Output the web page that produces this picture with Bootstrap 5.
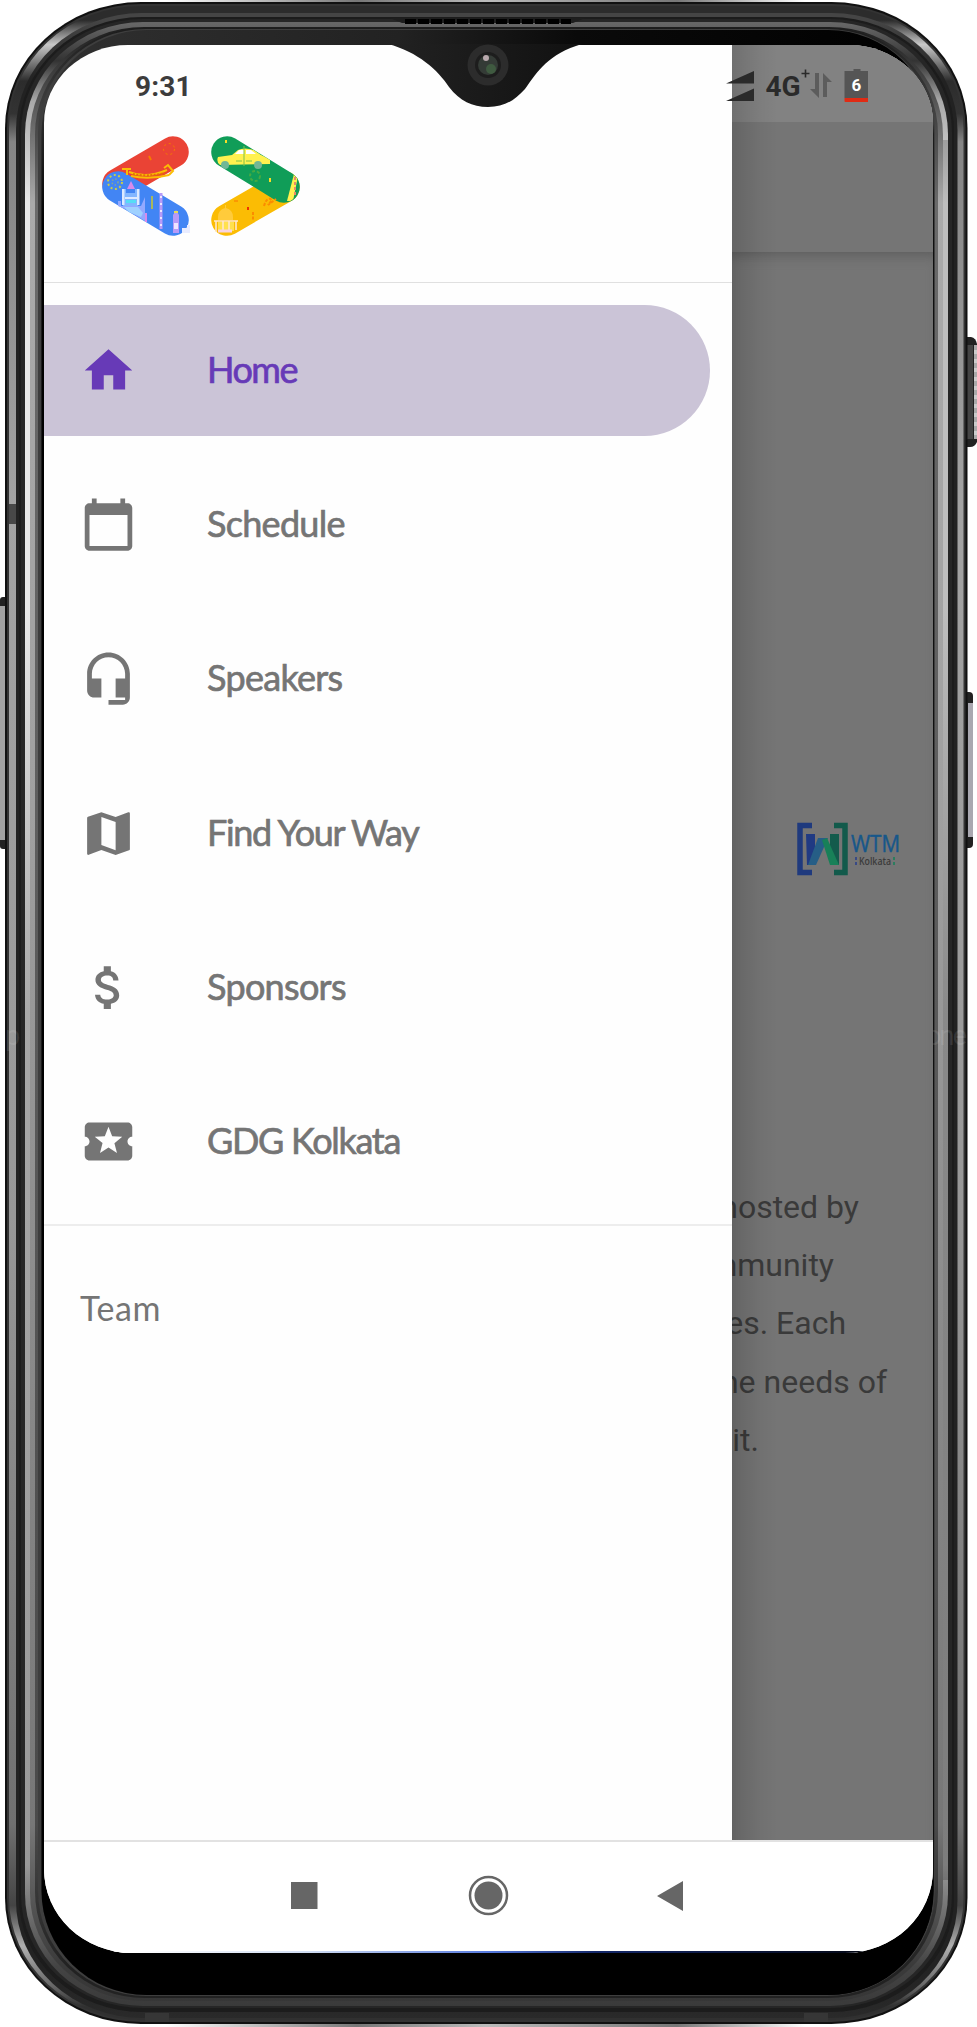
<!DOCTYPE html>
<html lang="en">
<head>
<meta charset="utf-8">
<meta name="viewport" content="width=device-width, initial-scale=1">
<title>DevFest Kolkata</title>
<link href="https://cdn.jsdelivr.net/npm/bootstrap@5.3.0/dist/css/bootstrap.min.css" rel="stylesheet">
<style>
  body { background: #fff; font-family: Roboto, sans-serif; }
  .phone { width: 977px; height: 2027px; padding: 45px 44px 74px; }
  .shell { top: 0; left: 0; pointer-events: none; }
  .display-area { height: 1908px; border-radius: 84px 84px 88px 88px / 78px 78px 84px 84px; background: #fefefe; }
  .statusbar { top: 0; left: 0; right: 0; height: 76px; color: #3c3c3c; font-weight: 700; font-size: 28px; line-height: 33px; padding: 25px 65px 0 91px; letter-spacing: .2px; }
  .drawer { width: 688px; font-family: Lato, "Open Sans", sans-serif; font-size: 36px; color: #757575; }
  .drawer-head { height: 238px; padding: 88px 0 0 56px; border-bottom: 1px solid #e0e0e0; }
  .drawer-list { padding-top: 22px; border-bottom: 2px solid #ededed; height: 943px; }
  .drawer-list .item { height: 131px; margin-bottom: 23.2px; width: 666px; padding-left: 36px; border-radius: 0 66px 66px 0; color: inherit; -webkit-text-stroke: .7px currentColor; letter-spacing: -.7px; }
  .drawer-list .item.active { background: #cbc4d7; color: #673ab7; }
  .item svg { width: 57px; height: 57px; margin-right: 70px; flex: none; }
  .item span { padding-bottom: 3px; }
  .item .snug { letter-spacing: -1.5px; }
  .item .tight { letter-spacing: -1.3px; }
  .team { padding: 57px 0 0 36px; font-size: 34px; line-height: 50px; letter-spacing: .6px; }
  .scrim { background: #757575; min-width: 0; }
  .scrim-status { height: 77px; background: #828282; }
  .scrim-bar { height: 130px; }
  .scrim-page { box-shadow: inset 0 10px 14px -8px #5a5a5a; }
  .edge { top: 0; bottom: 0; left: 0; width: 46px; background: linear-gradient(90deg, rgba(0,0,0,.14), rgba(0,0,0,.04) 60%, transparent); }
  .wtm { margin: 568px 0 0 62px; }
  .copy { margin-top: 300px; font-size: 32px; line-height: 58.2px; color: #3a3a3a; }
  .navkeys { height: 113px; border-top: 2px solid #e2e2e2; }
</style>
</head>
<body>
<div class="phone position-relative">
  <!-- metal frame, side keys -->
  <svg class="shell position-absolute" width="977" height="2027" viewBox="0 0 977 2027">
    <defs>
      <linearGradient id="rim" gradientUnits="userSpaceOnUse" x1="0" y1="0" x2="0" y2="2027"><stop offset=".01" stop-color="#2c2c2c"/><stop offset=".022" stop-color="#c8c8c8"/><stop offset=".04" stop-color="#2c2c2c"/><stop offset=".056" stop-color="#333"/><stop offset=".07" stop-color="#858585"/><stop offset=".25" stop-color="#a3a3a3"/><stop offset=".6" stop-color="#989898"/><stop offset=".9" stop-color="#707070"/><stop offset=".94" stop-color="#444"/><stop offset=".96" stop-color="#b0b0b0"/><stop offset=".98" stop-color="#666"/><stop offset=".99" stop-color="#303030"/></linearGradient>
      <linearGradient id="mid" gradientUnits="userSpaceOnUse" x1="0" y1="0" x2="0" y2="2027"><stop offset=".01" stop-color="#454545"/><stop offset=".04" stop-color="#222"/><stop offset=".97" stop-color="#222"/><stop offset="1" stop-color="#2b2b2b"/></linearGradient>
      <linearGradient id="shine" gradientUnits="userSpaceOnUse" x1="0" y1="0" x2="0" y2="2027"><stop offset=".012" stop-color="#666"/><stop offset=".03" stop-color="#333"/><stop offset=".05" stop-color="#aaa"/><stop offset=".1" stop-color="#e8e8e8"/><stop offset=".3" stop-color="#e8e8e8"/><stop offset=".5" stop-color="#a8a8a8"/><stop offset=".92" stop-color="#999"/><stop offset=".97" stop-color="#444"/><stop offset=".99" stop-color="#3a3a3a"/></linearGradient>
      <linearGradient id="shine2" gradientUnits="userSpaceOnUse" x1="0" y1="0" x2="0" y2="2027"><stop offset=".012" stop-color="#1c1c1c"/><stop offset=".04" stop-color="#444"/><stop offset=".1" stop-color="#aaa"/><stop offset=".4" stop-color="#a0a0a0"/><stop offset=".9" stop-color="#777"/><stop offset=".97" stop-color="#3a3a3a"/><stop offset=".99" stop-color="#363636"/></linearGradient>
      <linearGradient id="inner" gradientUnits="userSpaceOnUse" x1="0" y1="0" x2="0" y2="2027"><stop offset=".014" stop-color="#1c1c1c"/><stop offset=".05" stop-color="#3c3c3c"/><stop offset=".1" stop-color="#6a6a6a"/><stop offset=".9" stop-color="#4a4a4a"/><stop offset=".97" stop-color="#222"/></linearGradient>
      <linearGradient id="bezel" x1="0" x2="1"><stop offset="0" stop-color="#303030"/><stop offset=".4" stop-color="#222"/><stop offset=".6" stop-color="#0a0a0a"/><stop offset="1" stop-color="#000"/></linearGradient>
      <linearGradient id="down" x1="0" y1="0" x2="0" y2="1"><stop offset=".04" stop-color="#000" stop-opacity="0"/><stop offset=".1" stop-color="#000"/></linearGradient>
      <linearGradient id="lip" x1="0" x2="1"><stop offset="0" stop-color="#fff"/><stop offset=".3" stop-color="#777"/><stop offset=".5" stop-color="#bbb"/><stop offset=".8" stop-color="#777"/><stop offset="1" stop-color="#fff"/></linearGradient>
    </defs>
    <rect x="165" y="0" width="640" height="3" fill="url(#lip)"/>
    <rect x="165" y="2023" width="640" height="4" fill="url(#lip)"/>
    <rect x="0" y="597" width="9" height="252" rx="3" fill="#222"/><rect x="0" y="606" width="5" height="234" fill="#a2a2a2"/>
    <path d="M963 337h8q5 1 6 7v98q-2 5-7 5h-7z" fill="#222"/><rect x="967" y="345" width="6" height="94" fill="#454545"/><path d="M975.500 345v94" stroke="#ccc" stroke-width="3"/><path d="M975.500 345v94" stroke="#aaa" stroke-width="3" stroke-dasharray="5 4"/>
    <rect x="962" y="692" width="11" height="156" rx="4" fill="#222"/><rect x="968" y="703" width="5" height="134" fill="#a9a8b0"/>
    <rect x="5" y="2" width="962.500" height="2022" rx="136" ry="126" fill="#111"/>
    <rect x="7" y="4" width="958.500" height="2018" rx="134" ry="124" fill="#333"/>
    <rect x="9" y="6" width="954.500" height="2014" rx="132" ry="122" fill="url(#rim)"/>
    <rect x="16" y="13" width="941.500" height="2005" rx="126" ry="117" fill="url(#mid)"/>
    <rect x="19" y="17" width="935" height="1995" rx="123" ry="114" fill="#1c1c1c"/>
    <rect x="21" y="19" width="931" height="1989" rx="122" ry="113" fill="#262626"/>
    <rect x="25" y="22" width="923" height="1984" rx="118" ry="112" fill="url(#shine)"/>
    <path d="M945.500 140v1740" stroke="#000" stroke-opacity=".18" stroke-width="5"/>
    <rect x="30" y="27" width="913" height="1974" rx="114" ry="108" fill="url(#shine2)"/>
    <rect x="35" y="28" width="903" height="1970" rx="110" ry="106" fill="url(#inner)"/>
    <rect x="38" y="29" width="897" height="1967" rx="108" ry="105" fill="#3e3e3e"/>
    <rect x="41.500" y="30" width="892" height="1965" rx="105" ry="104" fill="url(#bezel)"/>
    <rect x="41.500" y="30" width="892" height="1965" rx="105" ry="104" fill="url(#down)"/>
    <rect x="9" y="504" width="7" height="20" fill="#484848"/>
    <rect x="145" y="2013" width="24" height="9" fill="#363636"/><rect x="804" y="2013" width="24" height="9" fill="#363636"/>
    <path d="M390 18h195l-12 5H402z" fill="#1e1e1e"/><path d="M405 21.500h166" stroke="#000" stroke-width="5" stroke-dasharray="11 2"/>
    <g font-family="Roboto" font-size="27" fill="#fff" fill-opacity=".1"><text x="5" y="1045">p</text><text x="926" y="1045" textLength="41">one</text></g>
  </svg>

  <div class="display-area position-relative overflow-hidden d-flex flex-column">
    <div class="d-flex flex-grow-1">
      <nav class="drawer flex-shrink-0">
        <div class="drawer-head">
          <svg width="204" height="110" viewBox="100 133 204 110">
            <defs>
              <clipPath id="cg"><path d="M235 138.500 292 173.500A15.700 15.700 0 0 1 276 200.500L219 165.500A15.700 15.700 0 0 1 235 138.500z"/></clipPath>
            </defs>
            <g stroke-width="31.500" stroke-linecap="round">
              <path d="M173 152 118 184" stroke="#ea4335"/><path d="M118 187 173 220" stroke="#4285f4"/>
              <path d="M227 220 284 187" stroke="#fbbc04"/><path d="M227 152 284 187" stroke="#109d58"/>
            </g>
            <g fill="none" stroke="#fbbc04" stroke-width="2"><path d="M122 169h9M127 168v7M129 172q17 7 38-2M131 176q18 4 38-1M164 168l4-3 5 6-4 4"/><path d="M133 174q14 3 32-1" stroke="#e37400" stroke-dasharray="2 1.500"/><circle cx="169" cy="149" r="5.500" stroke="#f57c00" stroke-width="1" stroke-dasharray="2 3"/><path d="M149 156l2 4" stroke="#f57c00"/></g>
            <circle cx="115" cy="182" r="7" fill="none" stroke="#c7cc4c" stroke-width="2" stroke-dasharray="2 2.500"/><circle cx="115" cy="182" r="3" fill="none" stroke="#8aa790" stroke-width="1.500" stroke-dasharray="1.500 2"/>
            <path d="M127 189l4-8 4 8z" fill="#d78bea"/><path d="M123 189h3v4h9v-4h3v17h-15z" fill="#82b6ff"/><path d="M122 189h2.500v16H122zM137 189h2.500v16H137zM125 197h12v2h-12z" fill="#ddeaff"/><path d="M126 200h10v3h-10z" fill="#55ddf5"/><path d="M118 201h3v5h20l4-9v24l-20-12-7-3z" fill="#93a9ff"/><path d="M124 207h14l5 6-2 4-12-5z" fill="#9fd1ff"/><path d="M145 213h2v9h-2z" fill="#d78bea"/>
            <path d="M152 196v13" stroke="#a8b85c" stroke-width="2"/><path d="M161 193v36" stroke="#b79af8" stroke-width="3"/><path d="M161 196v30" stroke="#fff" stroke-width="1.500" stroke-dasharray="2 5"/><path d="M173 215l3-5 3 5v18h-6z" fill="#b79af8"/><path d="M174 223h4v6h-4z" fill="#eee4ff"/><path d="M174 212h4" stroke="#e6dc59" stroke-width="2"/><path d="M182 228h5v-3h3v8h-8z" fill="#e9ecff"/>
            <g clip-path="url(#cg)"><path d="M218 157l14-2 6-5q6-3 16 0l7 5 9 4v5l-50 1q-4-3-2-8z" fill="#fff14f"/><path d="M235 154l4-4h5v4zM246 150h5l5 4h-10z" fill="#fff"/><path d="M244 146v20M236 161h6M246 161h6" stroke="#7fc24a"/><circle cx="225" cy="165" r="4" fill="#72b796"/><circle cx="258" cy="165" r="4" fill="#72b796"/><path d="M294 174l-7 27h6l5-25z" fill="#fff14f"/><path d="M295 177v20" stroke="#e88b6b" stroke-width="2" stroke-dasharray="3 2"/></g>
            <circle cx="255" cy="176" r="5" fill="none" stroke="#45ab43" stroke-width="2" stroke-dasharray="3 2"/><path d="M226 140v3M270 178v4" stroke="#f7dd28" stroke-width="2"/>
            <path d="M218 220v-3q0-7 7-9v-3h1v3q7 2 7 9v3z" fill="#ffcb3b"/><path d="M218 222h16v9h-16z" fill="#ffe14e"/><path d="M214 221h24M216 221v11M223 221v10M229 221v10M236 221v9" stroke="#ffe7cc" stroke-width="1.600"/><path d="M218 231h14" stroke="#f8d3e0" stroke-width="3"/><path d="M253 212v8M264 206q3-10 8-6l-4 5 8-6" stroke="#fb8c00" stroke-width="2" stroke-dasharray="3 1.500" fill="none"/><path d="M248 207v3" stroke="#e30" stroke-width="2"/><path d="M234 201h4" stroke="#fb8c00" stroke-width="1.500"/>
          </svg>
        </div>
        <div class="drawer-list">
          <a class="item active d-flex align-items-center text-decoration-none"><svg viewBox="0 0 24 24" fill="currentColor"><path d="M10 20v-6h4v6h5v-8h3L12 3 2 12h3v8z"/></svg><span class="snug">Home</span></a>
          <a class="item d-flex align-items-center text-decoration-none"><svg viewBox="0 0 24 24" fill="currentColor"><path d="M20 3h-1V1h-2v2H7V1H5v2H4c-1.100 0-2 .9-2 2v16c0 1.100.9 2 2 2h16c1.100 0 2-.9 2-2V5c0-1.100-.9-2-2-2zm0 18H4V8h16v13z"/></svg><span>Schedule</span></a>
          <a class="item d-flex align-items-center text-decoration-none"><svg viewBox="0 0 24 24" fill="currentColor"><path d="M12 1c-4.970 0-9 4.030-9 9v7c0 1.660 1.340 3 3 3h3v-8H5v-2c0-3.870 3.130-7 7-7s7 3.130 7 7v2h-4v8h4v1h-7v2h6c1.660 0 3-1.340 3-3V10c0-4.970-4.030-9-9-9z"/></svg><span>Speakers</span></a>
          <a class="item d-flex align-items-center text-decoration-none"><svg viewBox="0 0 24 24" fill="currentColor"><path d="M20.500 3l-.16.030L15 5.100 9 3 3.360 4.900c-.21.070-.36.250-.36.480V20.500c0 .28.220.5.500.5l.16-.030L9 18.900l6 2.100 5.640-1.900c.21-.070.36-.250.36-.480V3.500c0-.28-.22-.5-.5-.5zM15 19l-6-2.110V5l6 2.110V19z"/></svg><span class="tight">Find Your Way</span></a>
          <a class="item d-flex align-items-center text-decoration-none"><svg viewBox="0 0 24 24" fill="currentColor"><path d="M11.800 10.900c-2.270-.59-3-1.200-3-2.150 0-1.090 1.010-1.850 2.700-1.850 1.780 0 2.440.85 2.500 2.100h2.210c-.07-1.720-1.120-3.300-3.210-3.810V3h-3v2.160c-1.940.42-3.500 1.680-3.500 3.610 0 2.310 1.910 3.460 4.700 4.130 2.500.6 3 1.480 3 2.410 0 .69-.49 1.790-2.700 1.790-2.060 0-2.870-.92-2.980-2.100h-2.200c.12 2.190 1.760 3.420 3.680 3.830V21h3v-2.150c1.950-.37 3.500-1.500 3.500-3.550 0-2.840-2.430-3.810-4.700-4.400z"/></svg><span>Sponsors</span></a>
          <a class="item d-flex align-items-center text-decoration-none"><svg viewBox="0 0 24 24" fill="currentColor"><path d="M20 12c0-1.100.9-2 2-2V6c0-1.100-.9-2-2-2H4c-1.100 0-1.990.9-1.990 2v4c1.100 0 1.990.9 1.990 2s-.89 2-2 2v4c0 1.100.9 2 2 2h16c1.100 0 2-.9 2-2v-4c-1.100 0-2-.9-2-2zm-4.420 4.800L12 14.500l-3.580 2.300 1.080-4.120-3.290-2.690 4.240-.25L12 5.800l1.540 3.950 4.240.25-3.290 2.690 1.090 4.110z"/></svg><span class="tight">GDG Kolkata</span></a>
        </div>
        <div class="team">Team</div>
      </nav>

      <section class="scrim position-relative flex-grow-1 overflow-hidden d-flex flex-column">
        <div class="scrim-status"></div>
        <div class="scrim-bar"></div>
        <div class="scrim-page flex-grow-1">
          <svg class="wtm d-block" width="110" height="58" viewBox="794 820 110 58">
            <path d="M812 825.500h-12v47h12" fill="none" stroke="#1f3a7e" stroke-width="5.500"/><path d="M834 825.500h11v47h-11" fill="none" stroke="#125a4b" stroke-width="5.500"/>
            <path d="M806 834h9v31h-8z" fill="#203a83"/><path d="M830 834h9v31h-9z" fill="#135b4c"/><path d="M808 865l10-27h10l-12 27z" fill="#265e86"/><path d="M822 840l5-2 12 27h-9z" fill="#188058"/>
            <text x="851" y="852" font-family="Open Sans" font-size="24.500" fill="#17578a" stroke="#17578a" stroke-width=".5" textLength="49" lengthAdjust="spacingAndGlyphs">WTM</text>
            <text x="859" y="865" font-family="Open Sans" font-size="10" font-weight="600" fill="#3b3b3b" textLength="32" lengthAdjust="spacingAndGlyphs">Kolkata</text>
            <path d="M856 857v8" stroke="#263d8c" stroke-width="1.500" stroke-dasharray="3 2"/><path d="M894 857v8" stroke="#158058" stroke-width="1.500" stroke-dasharray="3 2"/>
          </svg>
          <div class="copy d-flex flex-column align-items-end text-nowrap">
            <div style="margin-right:74px">hosted by</div>
            <div style="margin-right:99px">mmunity</div>
            <div style="margin-right:87px">es. Each</div>
            <div style="margin-right:46px">he needs of</div>
            <div style="margin-right:174px">it.</div>
          </div>
        </div>
        <div class="edge position-absolute"></div>
      </section>
    </div>

    <div class="navkeys flex-shrink-0 bg-white">
      <svg width="889" height="111" viewBox="44 1842 889 111" class="d-block">
        <defs><linearGradient id="glow" gradientUnits="userSpaceOnUse" x1="44" y1="0" x2="933" y2="0"><stop offset=".1" stop-color="#fff"/><stop offset=".3" stop-color="#cfdcf2"/><stop offset=".5" stop-color="#5579dd"/><stop offset=".62" stop-color="#14286a"/><stop offset="1" stop-color="#000"/></linearGradient></defs>
        <path d="M291 1882h26.500v27H291zM683 1881v30l-26-15z" fill="#666"/>
        <circle cx="488.500" cy="1895.500" r="18.500" fill="none" stroke="#666" stroke-width="2.500"/><circle cx="488.500" cy="1895.500" r="14" fill="#666"/>
        <path d="M44 1951h889v2H44z" fill="url(#glow)"/>
      </svg>
    </div>

    <div class="statusbar position-absolute d-flex justify-content-between">
      <span>9:31</span>
      <svg width="146" height="46" viewBox="722 65 146 46" style="margin-top:-5px">
        <path d="M754 71v12.500h-28zM754 88.500V101h-28z" fill="#2a2a2a"/>
        <text x="765.500" y="96" font-family="Roboto" font-weight="700" font-size="28" letter-spacing="0" fill="#2a2a2a" textLength="35">4G</text>
        <path d="M801.500 73.500h8M805.500 69.500v8" stroke="#2a2a2a" stroke-width="1.600"/>
        <path d="M815 73h4v25l-9-9h5zM823 97V73l9 9h-5v15z" fill="#5c5c5c"/>
        <path d="M844.500 71h9v-2h7v2h8v27h-24z" fill="#555"/><path d="M844.500 98h24v3q0 1-1 1h-22q-1 0-1-1z" fill="#e02b14"/>
        <text x="851.500" y="91" font-family="Roboto" font-weight="700" font-size="17" fill="#fff">6</text>
      </svg>
    </div>
  </div>

  <!-- camera notch -->
  <svg class="shell position-absolute" width="977" height="120" viewBox="0 0 977 120">
    <defs><linearGradient id="notch" x1="0" x2="1"><stop offset="0" stop-color="#222"/><stop offset="1" stop-color="#111"/></linearGradient></defs>
    <path d="M388 44C418 52 438 70 449 87C460 101 472 107 488 107C504 107 514 101 525 89C538 71 548 54 582 44z" fill="url(#notch)"/>
    <circle cx="488" cy="65" r="20.500" fill="#2c2c2c"/><circle cx="488" cy="65" r="13" fill="#1d1d1d"/><circle cx="488" cy="65" r="10" fill="#343b36"/><circle cx="491" cy="69" r="5" fill="#3f5a40"/><circle cx="486" cy="58" r="3" fill="#b8a8ac"/>
  </svg>
</div>
<script src="https://cdn.jsdelivr.net/npm/bootstrap@5.3.0/dist/js/bootstrap.bundle.min.js"></script>
</body>
</html>
